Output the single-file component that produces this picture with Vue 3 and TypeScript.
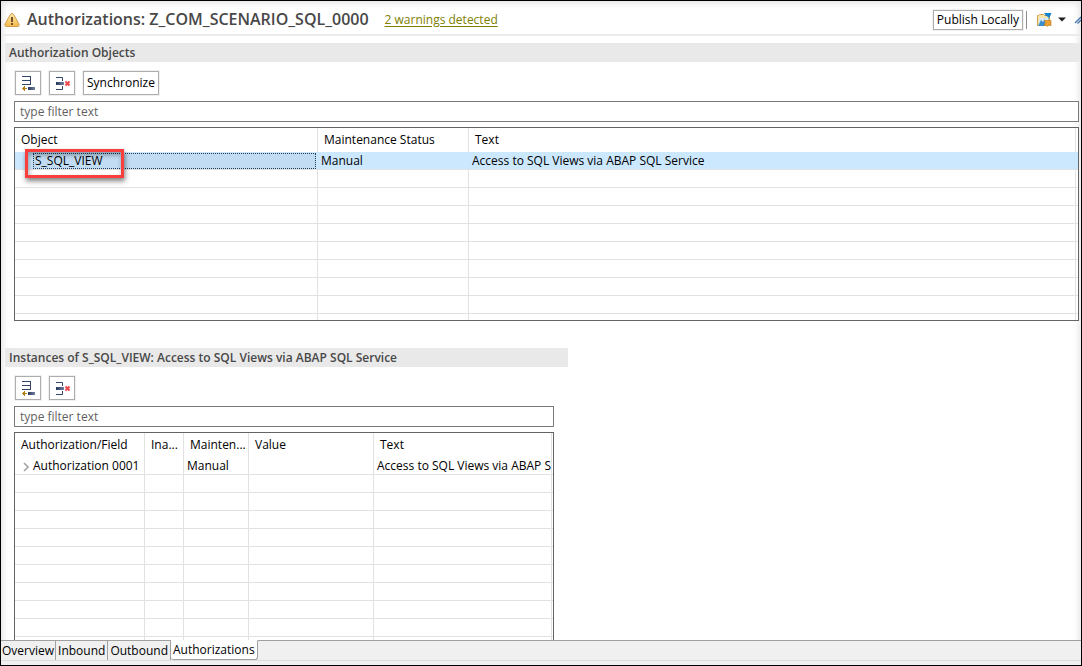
<script setup lang="ts">
import { ref } from 'vue'

interface ObjectRow {
  name: string
  status: string
  text: string
}

interface InstanceRow {
  name: string
  inactive: string
  status: string
  value: string
  text: string
}

const objects: ObjectRow[] = [
  { name: 'S_SQL_VIEW', status: 'Manual', text: 'Access to SQL Views via ABAP SQL Service' },
]

const instances: InstanceRow[] = [
  { name: 'Authorization 0001', inactive: '', status: 'Manual', value: '', text: 'Access to SQL Views via ABAP S' },
]

const objectFilter = ref('')
const instanceFilter = ref('')
const tabs = ['Overview', 'Inbound', 'Outbound', 'Authorizations']
const activeTab = ref('Authorizations')
</script>

<template>
  <div class="editor">
    <svg class="defs" width="0" height="0" aria-hidden="true">
      <defs>
        <linearGradient id="bar" x1="0" x2="1">
          <stop offset="0" stop-color="#27375c" />
          <stop offset="1" stop-color="#7482a0" />
        </linearGradient>
        <linearGradient id="warn" x1="0" y1="0" x2="0" y2="1">
          <stop offset="0" stop-color="#fdeab0" />
          <stop offset="1" stop-color="#f3b84a" />
        </linearGradient>
        <symbol id="icon-add" viewBox="0 0 16 16">
          <path d="M2 1.5h8M2 5.5h8M2 9.5h8M10.5 1v9" stroke="#34446a" fill="none" />
          <rect x="8" y="12" width="7" height="3" fill="url(#bar)" />
          <path d="M2 13.5h5" stroke="#c08a1e" fill="none" />
          <path d="M4 11h1v5h-1zM3 12h2v3h-2z" fill="#b97a10" />
        </symbol>
        <symbol id="icon-remove" viewBox="0 0 16 16">
          <path d="M2 2.5h6.5V6M2 14.5h6.5V11" stroke="#34446a" fill="none" />
          <rect x="2" y="7" width="8" height="3" fill="url(#bar)" />
          <path d="M11.500 6.500l4 4M15.500 6.500l-4 4" stroke="#f04848" stroke-width="2" fill="none" />
        </symbol>
      </defs>
    </svg>

    <header class="heading">
      <svg class="warning" width="16" height="16" viewBox="0 0 16 16" aria-hidden="true">
        <path d="M8 1.5c.8 0 1.300.4 1.700 1.100l5.200 9.300c.7 1.400 0 2.600-1.500 2.600H2.600c-1.500 0-2.200-1.200-1.500-2.600l5.200-9.300c.4-.7.900-1.100 1.700-1.100z" fill="url(#warn)" stroke="#d39c4a" />
        <path d="M7 5h2v5H7zM7 11h2v2H7z" fill="#74502a" />
      </svg>
      <h1>Authorizations: Z_COM_SCENARIO_SQL_0000</h1>
      <a class="warnings" href="#">2 warnings detected</a>
      <div class="actions">
        <button type="button" class="push publish">Publish Locally</button>
        <span class="divider"></span>
        <button type="button" class="flat" aria-label="Open with">
          <svg width="16" height="16" viewBox="0 0 16 16" aria-hidden="true">
            <path d="M1.500 13.500v-10h1l1-1h4l1 1h5v10z" fill="#f8e3a8" stroke="#cfa04e" />
            <path d="M3 6h9v7H3z" fill="#d5eaf7" />
            <path d="M2 14l3-6 2 2 2-3v7z" fill="#3b8fce" />
            <path d="M8 1h7.500l-3 7V5L10 4z" fill="#1583c9" />
            <path d="M8 8.500h7v5.500l-1.500-1.500-2 2-1.500-1.500-2 .5 1.500-3z" fill="#eba231" stroke="#bd7a18" stroke-width=".6" />
          </svg>
        </button>
        <button type="button" class="flat" aria-label="More">
          <svg width="8" height="5" viewBox="0 0 8 5" aria-hidden="true"><path d="M0 0.500h8L4 4.500z" fill="#1e1e1e" /></svg>
        </button>
        <button type="button" class="flat last" aria-label="Link">
          <svg width="7" height="8" viewBox="0 0 7 8" aria-hidden="true"><path d="M1 7L7 1M3.500 7.500L7 4" stroke="#4274ad" stroke-width="1.300" fill="none" /></svg>
        </button>
      </div>
    </header>

    <main class="content">
      <section class="panel">
        <h2>Authorization Objects</h2>
        <div class="inner">
          <div class="toolbar">
            <button type="button" class="push icon" aria-label="Add object"><svg width="16" height="16"><use href="#icon-add" /></svg></button>
            <button type="button" class="push icon" aria-label="Remove object"><svg width="16" height="16"><use href="#icon-remove" /></svg></button>
            <button type="button" class="push">Synchronize</button>
          </div>
          <input v-model="objectFilter" class="filter" type="text" placeholder="type filter text" aria-label="Filter objects" />
          <div class="grid objects">
            <table>
              <colgroup><col class="w-object" /><col class="w-status" /><col /><col class="w-end" /></colgroup>
              <thead>
                <tr><th>Object</th><th>Maintenance Status</th><th>Text</th><th></th></tr>
              </thead>
              <tbody>
                <tr v-for="row in objects" :key="row.name" class="selected">
                  <td class="focus-cell"><span class="focus">{{ row.name }}</span><span class="marker"></span></td>
                  <td>{{ row.status }}</td>
                  <td>{{ row.text }}</td>
                  <td></td>
                </tr>
                <tr v-for="n in 9" :key="n"><td v-for="c in 4" :key="c"></td></tr>
              </tbody>
            </table>
          </div>
        </div>
      </section>

      <div class="lower">
        <section class="panel">
          <h2>Instances of S_SQL_VIEW: Access to SQL Views via ABAP SQL Service</h2>
          <div class="inner narrow">
            <div class="toolbar">
              <button type="button" class="push icon" aria-label="Add instance"><svg width="16" height="16"><use href="#icon-add" /></svg></button>
              <button type="button" class="push icon" aria-label="Remove instance"><svg width="16" height="16"><use href="#icon-remove" /></svg></button>
            </div>
            <input v-model="instanceFilter" class="filter" type="text" placeholder="type filter text" aria-label="Filter instances" />
            <div class="grid instances">
              <table>
                <colgroup><col class="w-auth" /><col class="w-inactive" /><col class="w-maint" /><col class="w-value" /><col /><col class="w-tail" /></colgroup>
                <thead>
                  <tr><th>Authorization/Field</th><th>Ina...</th><th>Mainten...</th><th>Value</th><th>Text</th><th></th></tr>
                </thead>
                <tbody>
                  <tr v-for="row in instances" :key="row.name">
                    <td class="tree">
                      <svg width="6" height="10" viewBox="0 0 6 10" aria-hidden="true"><path d="M1 1l4 4-4 4" fill="none" stroke="#a6a6a6" stroke-width="1.600" /></svg>
                      <span>{{ row.name }}</span>
                    </td>
                    <td>{{ row.inactive }}</td>
                    <td>{{ row.status }}</td>
                    <td>{{ row.value }}</td>
                    <td>{{ row.text }}</td>
                    <td></td>
                  </tr>
                  <tr v-for="n in 10" :key="n"><td v-for="c in 6" :key="c"></td></tr>
                </tbody>
              </table>
            </div>
          </div>
        </section>
      </div>
    </main>

    <nav class="tabs">
      <button v-for="tab in tabs" :key="tab" type="button" :class="{ active: tab === activeTab }" @click="activeTab = tab">{{ tab }}</button>
      <span class="rest"></span>
    </nav>
  </div>
</template>

<style>
body {
  margin: 0;
}
</style>

<style scoped>
.editor {
  box-sizing: border-box;
  height: 100vh;
  display: flex;
  flex-direction: column;
  overflow: hidden;
  border: 1px solid #000;
  background: #fff;
  box-shadow: inset 0 0 8px #d8d4d8;
  color: #000;
  font: 12px/18px "Open Sans", "Noto Sans", sans-serif;
}

.defs {
  position: absolute;
}

.heading {
  box-sizing: border-box;
  flex: none;
  height: 35px;
  display: flex;
  align-items: center;
  padding: 4px 0 0 3px;
  border-bottom: 2px solid #ececec;
}

h1 {
  margin: 0 0 0 7px;
  padding-bottom: 2px;
  font-size: 16px;
  font-weight: 600;
  line-height: 20px;
  color: #484848;
  white-space: nowrap;
}

.warnings {
  margin-left: 16px;
  color: #808000;
  text-underline-offset: 2px;
  white-space: nowrap;
}

.actions {
  margin-left: auto;
  display: flex;
  align-items: center;
}

.push {
  box-sizing: border-box;
  height: 24px;
  padding: 0 4px;
  border: 1px solid #adadad;
  outline: 1px solid #f0f0f0;
  background: #fff;
  color: #000;
  font: inherit;
  white-space: nowrap;
}

.toolbar .push {
  padding: 0 3px;
}

.publish {
  height: 20px;
  padding: 0 3px;
  line-height: 16px;
}

.divider {
  width: 1px;
  height: 18px;
  margin: 0 9px 0 3px;
  background: #8c8c8c;
}

.flat {
  display: flex;
  padding: 0;
  border: 0;
  background: none;
  margin-right: 6px;
}

.flat + .flat {
  margin-right: 8px;
}

.flat + .flat.last {
  margin: 0;
}

.content {
  flex: 1;
  min-height: 0;
  display: flex;
  flex-direction: column;
  gap: 27px;
  padding: 7px 0 0 4px;
}

.lower {
  flex: 1;
  min-height: 0;
  display: grid;
  grid-template-columns: 563fr 513fr;
}

.panel {
  min-width: 0;
  min-height: 0;
  display: flex;
  flex-direction: column;
}

h2 {
  flex: none;
  margin: 0;
  padding-left: 4px;
  background: #e9e9e9;
  color: #484848;
  font-size: 12px;
  font-weight: 600;
  line-height: 19px;
  white-space: nowrap;
}

.inner {
  flex: 1;
  min-height: 0;
  display: flex;
  flex-direction: column;
  padding: 9px 2px 0 9px;
}

.inner.narrow {
  padding-right: 14px;
}

.toolbar {
  display: flex;
  gap: 8px;
  padding-left: 1px;
}

.icon {
  width: 26px;
  display: flex;
  align-items: center;
  justify-content: center;
}

.filter {
  box-sizing: border-box;
  flex: none;
  width: 100%;
  height: 21px;
  margin: 6px 0 5px;
  padding: 0 5px;
  border: 1px solid #7a7a7a;
  background: #fff;
  color: #000;
  font: inherit;
}

.filter::placeholder {
  color: #5f5f5f;
  opacity: 1;
}

.grid {
  box-sizing: border-box;
  overflow: hidden;
  border: 1px solid #646464;
  background: #fff;
}

.objects {
  height: 194px;
}

.instances {
  flex: 1;
  min-height: 0;
  border-bottom: 0;
}

table {
  width: 100%;
  table-layout: fixed;
  border-collapse: separate;
  border-spacing: 0;
}

.w-object { width: 303px; }
.w-status { width: 151px; }
.w-end { width: 2px; }
.w-auth { width: 130px; }
.w-inactive { width: 39px; }
.w-maint { width: 65px; }
.w-value { width: 125px; }
.w-tail { width: 1px; }

th,
td {
  box-sizing: border-box;
  padding: 0 0 0 3px;
  overflow: hidden;
  border-right: 1px solid #e2e2e2;
  text-align: left;
  font-weight: normal;
  white-space: nowrap;
}

th {
  height: 24px;
  padding-left: 6px;
}

td {
  height: 18px;
  border-bottom: 1px solid #e2e2e2;
  line-height: 17px;
}

th:last-child,
td:last-child {
  padding: 0;
  border-right: 0;
}

.selected td {
  background: #cce8ff;
  border-right-color: #cce8ff;
}

.focus-cell {
  position: relative;
  padding: 0 1px 0 18px;
  overflow: visible;
}

.focus {
  box-sizing: border-box;
  display: block;
  height: 16px;
  padding-left: 1px;
  border: 1px dotted #1d3c5c;
  background: #c2dcf3;
  line-height: 14px;
}

.marker {
  position: absolute;
  left: 10px;
  top: -3px;
  box-sizing: border-box;
  width: 99px;
  height: 29px;
  border: 3px solid #fa3e3e;
  box-shadow: 1px 3px 5px rgba(0, 0, 0, 0.5), inset 1px 3px 5px rgba(0, 0, 0, 0.35);
}

.tree svg {
  margin: 0 4px 0 5px;
  vertical-align: -2px;
}

.tabs {
  flex: none;
  height: 25px;
  display: flex;
  align-items: flex-start;
  background: linear-gradient(#f0f0f0 20px, #dcdcdc 20px, #dcdcdc 21px, #f0f0f0 21px);
}

.tabs button {
  box-sizing: border-box;
  height: 20px;
  padding: 0 2px;
  border: 0;
  border-top: 1px solid #a0a0a0;
  border-right: 1px solid #a0a0a0;
  background: none;
  color: #000;
  font: inherit;
  line-height: 18px;
}

.tabs button:first-child {
  padding: 0 1px;
}

.tabs button.active {
  border-top-color: #fff;
  border-bottom: 1px solid #a0a0a0;
  border-radius: 0 0 3px 3px;
  background: #fff;
}

.rest {
  flex: 1;
  border-top: 1px solid #a0a0a0;
}
</style>
